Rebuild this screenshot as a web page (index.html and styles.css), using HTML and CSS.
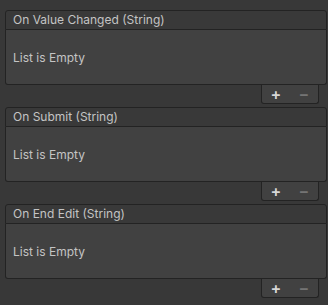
FILE: index.html
```html
<!DOCTYPE html>
<html lang="en">
<head>
    <meta charset="UTF-8">
    <title>Input Field Events</title>
    <link rel="stylesheet" href="styles.css">
</head>
<body>
    <div class="event-list">
        <div class="event">
            <div class="event-header">On Value Changed (String)</div>
            <div class="event-body">List is Empty</div>
            <div class="event-footer">
                <span class="btn add">+</span>
                <span class="btn remove">&minus;</span>
            </div>
        </div>
        <div class="event">
            <div class="event-header">On Submit (String)</div>
            <div class="event-body">List is Empty</div>
            <div class="event-footer">
                <span class="btn add">+</span>
                <span class="btn remove">&minus;</span>
            </div>
        </div>
        <div class="event">
            <div class="event-header">On End Edit (String)</div>
            <div class="event-body">List is Empty</div>
            <div class="event-footer">
                <span class="btn add">+</span>
                <span class="btn remove">&minus;</span>
            </div>
        </div>
    </div>
</body>
</html>
```

FILE: styles.css
```css
:root {
    --bg: #383838;
    --header-bg: #393939;
    --body-bg: #414141;
    --border: #232323;
    --text: #c4c4c4;
    --muted: #747474;
}

body {
    margin: 0;
    background-color: var(--bg);
    font-family: 'Inter', 'Noto Sans', sans-serif;
    font-size: 12px;
    color: var(--text);
}

.event-list {
    display: flex;
    flex-direction: column;
    gap: 3px;
    padding: 10px 1px 0 5px;
}

.event {
    display: flex;
    flex-direction: column;
}

.event-header {
    height: 18px;
    line-height: 18px;
    padding: 0 7px;
    background-color: var(--header-bg);
    border: 1px solid var(--border);
    border-radius: 3px 3px 0 0;
}

.event-body {
    height: 54px;
    display: flex;
    align-items: center;
    padding: 0 7px;
    background-color: var(--body-bg);
    border: 1px solid var(--border);
    border-top: none;
    border-radius: 0 0 3px 3px;
}

.event-footer {
    align-self: flex-end;
    margin-right: 8px;
    width: 56px;
    height: 18px;
    display: flex;
    align-items: center;
    justify-content: space-around;
    background-color: var(--body-bg);
    border: 1px solid var(--border);
    border-top: none;
    border-radius: 0 0 3px 3px;
}

.btn {
    font-size: 16px;
    font-weight: 600;
    line-height: 1;
}

.add {
    color: #d6d6d6;
}

.remove {
    color: var(--muted);
}
```
